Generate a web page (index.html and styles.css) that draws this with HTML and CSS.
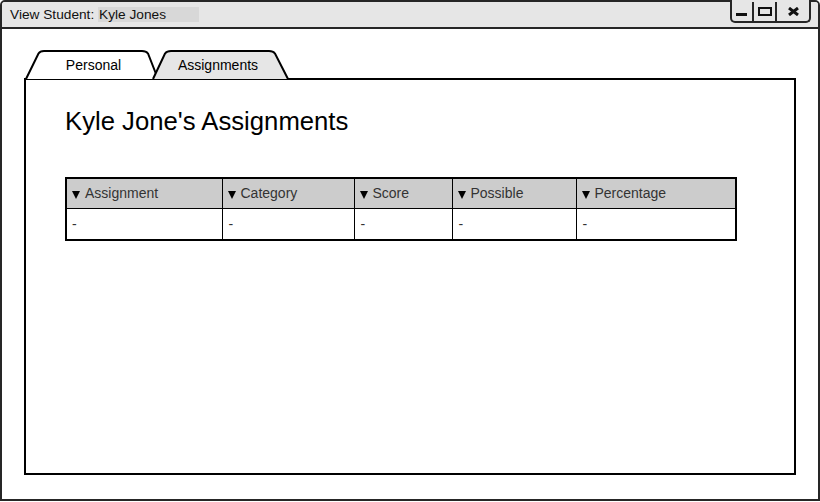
FILE: index.html
```html
<!DOCTYPE html>
<html>
<head>
<meta charset="utf-8">
<link rel="stylesheet" href="styles.css">
</head>
<body>
<div class="window">
  <div class="titlebar">
    <span class="title">View Student: <span class="hl">Kyle Jones</span></span>
    <div class="controls">
      <div class="ctl ctl-min"><svg width="12" height="4" viewBox="0 0 12 4"><rect x="0" y="0" width="11" height="3" fill="#111"/></svg></div>
      <div class="ctl ctl-max"><svg width="14" height="9" viewBox="0 0 14 9"><rect x="1" y="1" width="12" height="7" fill="none" stroke="#111" stroke-width="2"/></svg></div>
      <div class="ctl ctl-close"><svg width="11" height="9" viewBox="0 0 11 9"><path d="M1 1 L10 8 M10 1 L1 8" stroke="#111" stroke-width="3" stroke-linecap="butt"/></svg></div>
    </div>
  </div>
  <div class="content">
    <div class="tabs">
      <div class="tab tab-personal">
        <svg class="tab-shape" width="134" height="30" viewBox="0 0 134 30"><path d="M1 29 L13.5 3.5 Q15 1 19 1 L117 1 Q121 1 123 3.5 L133 29" fill="#fff" stroke="#000" stroke-width="2"/></svg>
        <span class="tab-label">Personal</span>
      </div>
      <div class="tab tab-assign">
        <svg class="tab-shape" width="137" height="30" viewBox="0 0 137 30"><path d="M1 29 L13 3.5 Q15 1 19 1 L117 1 Q121 1 123 3.5 L136 29" fill="#e6e6e6" stroke="#000" stroke-width="2"/></svg>
        <span class="tab-label">Assignments</span>
      </div>
    </div>
    <div class="panel">
      <h1 class="heading">Kyle Jone's Assignments</h1>
      <table class="grid">
        <colgroup>
          <col class="c1"><col class="c2"><col class="c3"><col class="c4"><col class="c5">
        </colgroup>
        <thead>
          <tr>
            <th><span class="tri"></span>Assignment</th>
            <th><span class="tri"></span>Category</th>
            <th><span class="tri"></span>Score</th>
            <th><span class="tri"></span>Possible</th>
            <th><span class="tri"></span>Percentage</th>
          </tr>
        </thead>
        <tbody>
          <tr><td>-</td><td>-</td><td>-</td><td>-</td><td>-</td></tr>
        </tbody>
      </table>
    </div>
  </div>
</div>
</body>
</html>
```

FILE: styles.css
```css
html, body {
  margin: 0;
  padding: 0;
  background: #fff;
}
body {
  font-family: "Liberation Sans", Arial, sans-serif;
  color: #000;
}
.window {
  box-sizing: border-box;
  width: 820px;
  height: 501px;
  border: 2px solid #262626;
  border-radius: 5px 5px 0 0;
  display: flex;
  flex-direction: column;
  background: #fff;
}
.titlebar {
  height: 25px;
  background: #e6e6e6;
  border-bottom: 2px solid #262626;
  border-radius: 3px 3px 0 0;
  display: flex;
  align-items: flex-start;
  justify-content: space-between;
  flex-shrink: 0;
}
.title {
  font-size: 13.7px;
  line-height: 15px;
  margin-top: 5px;
  margin-left: 8px;
  color: #111;
}
.hl {
  display: inline-block;
  background: #d8d8d8;
  width: 100px;
  padding-left: 1px;
}
.controls {
  display: flex;
  height: 19px;
  margin-right: 7px;
  border: 2px solid #262626;
  border-top: none;
  border-radius: 0 0 5px 5px;
  margin-top: -2px;
  padding-top: 2px;
  background: #e6e6e6;
}
.ctl {
  display: flex;
  align-items: center;
  justify-content: center;
}
.ctl svg { display: block; }
.ctl-min {
  width: 22px;
  border-right: 2px solid #262626;
  align-items: flex-end;
  padding-bottom: 4px;
  box-sizing: border-box;
}
.ctl-max {
  width: 21px;
  border-right: 2px solid #262626;
}
.ctl-close {
  width: 32px;
}
.content {
  flex: 1;
  display: flex;
  flex-direction: column;
  padding: 21px 22px 24px 22px;
}
.tabs {
  display: flex;
  height: 28px;
  position: relative;
  z-index: 1;
}
.tab {
  position: relative;
  height: 28px;
  display: flex;
  align-items: center;
  justify-content: center;
  font-size: 14px;
}
.tab-shape {
  position: absolute;
  left: 0;
  top: 0;
}
.tab-label {
  position: relative;
  padding-top: 1px;
}
.tab-personal {
  width: 134px;
  margin-left: 1px;
}
.tab-personal .tab-label {
  margin-left: 3px;
}
.tab-assign {
  width: 137px;
  margin-left: -7px;
}
.tab-assign .tab-label {
  margin-right: 5px;
}
.panel {
  flex: 1;
  border: 2px solid #000;
  padding: 0 0 0 39px;
}
.heading {
  font-weight: normal;
  font-size: 25.7px;
  line-height: 30px;
  margin: 26px 0 0 0;
  color: #000;
}
.grid {
  margin-top: 41px;
  border-collapse: collapse;
  table-layout: fixed;
  width: 670px;
  border: 2px solid #000;
  font-size: 14px;
}
.c1 { width: 156px; }
.c2 { width: 132px; }
.c3 { width: 98px; }
.c4 { width: 124px; }
.c5 { width: 160px; }
.grid th {
  background: #cccccc;
  font-weight: normal;
  text-align: left;
  color: #333;
  height: 30px;
  padding: 0 0 0 5px;
  border-left: 1px solid #000;
  border-bottom: 1px solid #000;
  box-sizing: border-box;
}
.grid td {
  height: 30px;
  padding: 0 0 0 6px;
  border-left: 1px solid #000;
  color: #333;
}
.grid td:first-child {
  padding-left: 5px;
}
.tri {
  display: inline-block;
  width: 0;
  height: 0;
  border-left: 4px solid transparent;
  border-right: 4px solid transparent;
  border-top: 8px solid #000;
  margin-right: 5px;
  vertical-align: -1px;
}
```
